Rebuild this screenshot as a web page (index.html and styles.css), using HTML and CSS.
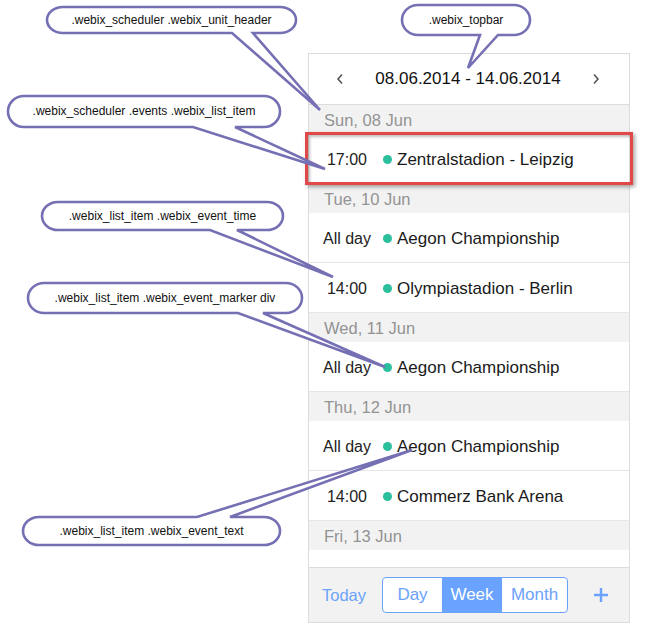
FILE: index.html
```html
<!DOCTYPE html>
<html>
<head>
<meta charset="utf-8">
<title>Scheduler styling</title>
<link rel="stylesheet" href="styles.css">
</head>
<body>
<div class="scheduler">
  <div class="topbar">
    <span class="nav"><svg width="8" height="12" viewBox="0 0 8 12"><polyline points="6,1.5 2,6 6,10.5" fill="none" stroke="#555" stroke-width="1.6"/></svg></span>
    <span class="title">08.06.2014 - 14.06.2014</span>
    <span class="nav"><svg width="8" height="12" viewBox="0 0 8 12"><polyline points="2,1.5 6,6 2,10.5" fill="none" stroke="#555" stroke-width="1.6"/></svg></span>
  </div>
  <div class="list">
    <div class="day">Sun, 08 Jun</div>
    <div class="item"><span class="time">17:00</span><span class="marker"></span><span class="text">Zentralstadion - Leipzig</span></div>
    <div class="day">Tue, 10 Jun</div>
    <div class="item"><span class="time">All day</span><span class="marker"></span><span class="text">Aegon Championship</span></div>
    <div class="item"><span class="time">14:00</span><span class="marker"></span><span class="text">Olympiastadion - Berlin</span></div>
    <div class="day">Wed, 11 Jun</div>
    <div class="item"><span class="time">All day</span><span class="marker"></span><span class="text">Aegon Championship</span></div>
    <div class="day">Thu, 12 Jun</div>
    <div class="item"><span class="time">All day</span><span class="marker"></span><span class="text">Aegon Championship</span></div>
    <div class="item"><span class="time">14:00</span><span class="marker"></span><span class="text">Commerz Bank Arena</span></div>
    <div class="day">Fri, 13 Jun</div>
  </div>
  <div class="bottombar">
    <span class="today">Today</span>
    <div class="segmented">
      <span class="seg seg-day">Day</span>
      <span class="seg seg-week active">Week</span>
      <span class="seg seg-month">Month</span>
    </div>
    <span class="add"><svg width="14" height="14" viewBox="0 0 14 14"><path d="M7 0V14M0 7H14" stroke="#6ba2fb" stroke-width="2.4"/></svg></span>
  </div>
</div>

<div class="highlight"></div>

<svg class="callouts" width="647" height="628" viewBox="0 0 647 628">
  <g fill="#fff" stroke="#7570b3" stroke-width="2.6" stroke-linejoin="miter">
    <path d="M63 7 H280 A16 13 0 0 1 296 20 A16 13 0 0 1 280 33 H253 L320 110 L232 33 H63 A16 13 0 0 1 47 20 A16 13 0 0 1 63 7 Z"/>
    <path d="M418 5 H514 A16 15 0 0 1 530 20 A16 15 0 0 1 514 35 H498 L468 68 L480 35 H418 A16 15 0 0 1 402 20 A16 15 0 0 1 418 5 Z"/>
    <path d="M24 96 H264 A16 15.5 0 0 1 280 111.5 A16 15.5 0 0 1 264 127 H235 L325 169 L193 127 H24 A16 15.5 0 0 1 8 111.5 A16 15.5 0 0 1 24 96 Z"/>
    <path d="M58 202 H267 A16 14 0 0 1 283 216 A16 14 0 0 1 267 230 H237 L333 277 L210 230 H58 A16 14 0 0 1 42 216 A16 14 0 0 1 58 202 Z"/>
    <path d="M44 283 H286 A16 15 0 0 1 302 298 A16 15 0 0 1 286 313 H263 L385 367 L238 313 H44 A16 15 0 0 1 28 298 A16 15 0 0 1 44 283 Z"/>
    <path d="M39 517 H197 L412 450 L230 517 H264 A16 14 0 0 1 280 531 A16 14 0 0 1 264 545 H39 A16 14 0 0 1 23 531 A16 14 0 0 1 39 517 Z"/>
  </g>
</svg>

<div class="label label-unit">.webix_scheduler .webix_unit_header</div>
<div class="label label-topbar">.webix_topbar</div>
<div class="label label-item">.webix_scheduler .events .webix_list_item</div>
<div class="label label-time">.webix_list_item .webix_event_time</div>
<div class="label label-marker">.webix_list_item .webix_event_marker div</div>
<div class="label label-text">.webix_list_item .webix_event_text</div>
</body>
</html>
```

FILE: styles.css
```css
html, body {
  margin: 0;
  padding: 0;
  background: #fff;
}
body {
  position: relative;
  width: 647px;
  height: 628px;
  overflow: hidden;
  font-family: "Liberation Sans", Arial, sans-serif;
}

.scheduler {
  margin-left: 308px;
  margin-top: 53px;
  width: 320px;
  border: 1px solid #dcdcdc;
  display: flex;
  flex-direction: column;
  background: #fff;
}

.topbar {
  height: 50px;
  border-bottom: 1px solid #dcdcdc;
  display: flex;
  align-items: center;
  justify-content: space-between;
  padding: 0 29px 0 27px;
  box-sizing: content-box;
}
.nav {
  display: flex;
  width: 8px;
  height: 12px;
}
.title {
  font-size: 17px;
  color: #111;
}

.list {
  height: 462px;
  overflow: hidden;
  display: flex;
  flex-direction: column;
}
.day {
  flex: none;
  height: 29px;
  line-height: 31px;
  background: #f2f2f2;
  color: #939393;
  font-size: 16.5px;
  padding-left: 15px;
}
.item {
  flex: none;
  height: 47px;
  padding-top: 2px;
  border-bottom: 1px solid #e6e6e6;
  display: flex;
  align-items: center;
  color: #1a1a1a;
}
.time {
  width: 62px;
  margin-left: 7px;
  text-align: center;
  color: #222;
  font-size: 16px;
}
.marker {
  width: 9px;
  height: 9px;
  border-radius: 50%;
  background: #2bbf9d;
  margin-left: 5px;
  margin-right: 5px;
}
.text {
  font-size: 17px;
}

.bottombar {
  height: 54px;
  border-top: 1px solid #dcdcdc;
  background: #f2f2f2;
  display: flex;
  align-items: center;
  padding-left: 13px;
}
.today {
  font-size: 16.5px;
  color: #6ba2fb;
  width: 47px;
}
.segmented {
  margin-left: 13px;
  display: flex;
  height: 36px;
  border: 1px solid #6ba2fb;
  border-radius: 4px;
  overflow: hidden;
  background: #fff;
  box-sizing: border-box;
}
.seg {
  display: flex;
  align-items: center;
  justify-content: center;
  font-size: 17px;
  color: #6ba2fb;
}
.seg-day { width: 59px; }
.seg-week { width: 60px; }
.seg-month { width: 65px; }
.seg.active {
  background: #69a3ff;
  color: #fff;
}
.add {
  display: flex;
  margin-left: 26px;
}

.highlight {
  position: absolute;
  left: 305px;
  top: 132px;
  width: 328px;
  height: 53px;
  box-sizing: border-box;
  border: 3px solid #e24848;
  box-shadow: 2px 2px 4px rgba(0, 0, 0, 0.35), inset 2px 2px 3px rgba(0, 0, 0, 0.25);
}

.callouts {
  position: absolute;
  left: 0;
  top: 0;
  pointer-events: none;
}

.label {
  position: absolute;
  display: flex;
  align-items: center;
  justify-content: center;
  font-size: 12px;
  color: #111;
  white-space: nowrap;
}
.label-unit { left: 47px; top: 7px; width: 249px; height: 26px; }
.label-topbar { left: 402px; top: 5px; width: 128px; height: 30px; }
.label-item { left: 8px; top: 96px; width: 272px; height: 30px; }
.label-time { left: 42px; top: 202px; width: 241px; height: 28px; }
.label-marker { left: 28px; top: 283px; width: 274px; height: 30px; }
.label-text { left: 23px; top: 517px; width: 257px; height: 28px; }
```
